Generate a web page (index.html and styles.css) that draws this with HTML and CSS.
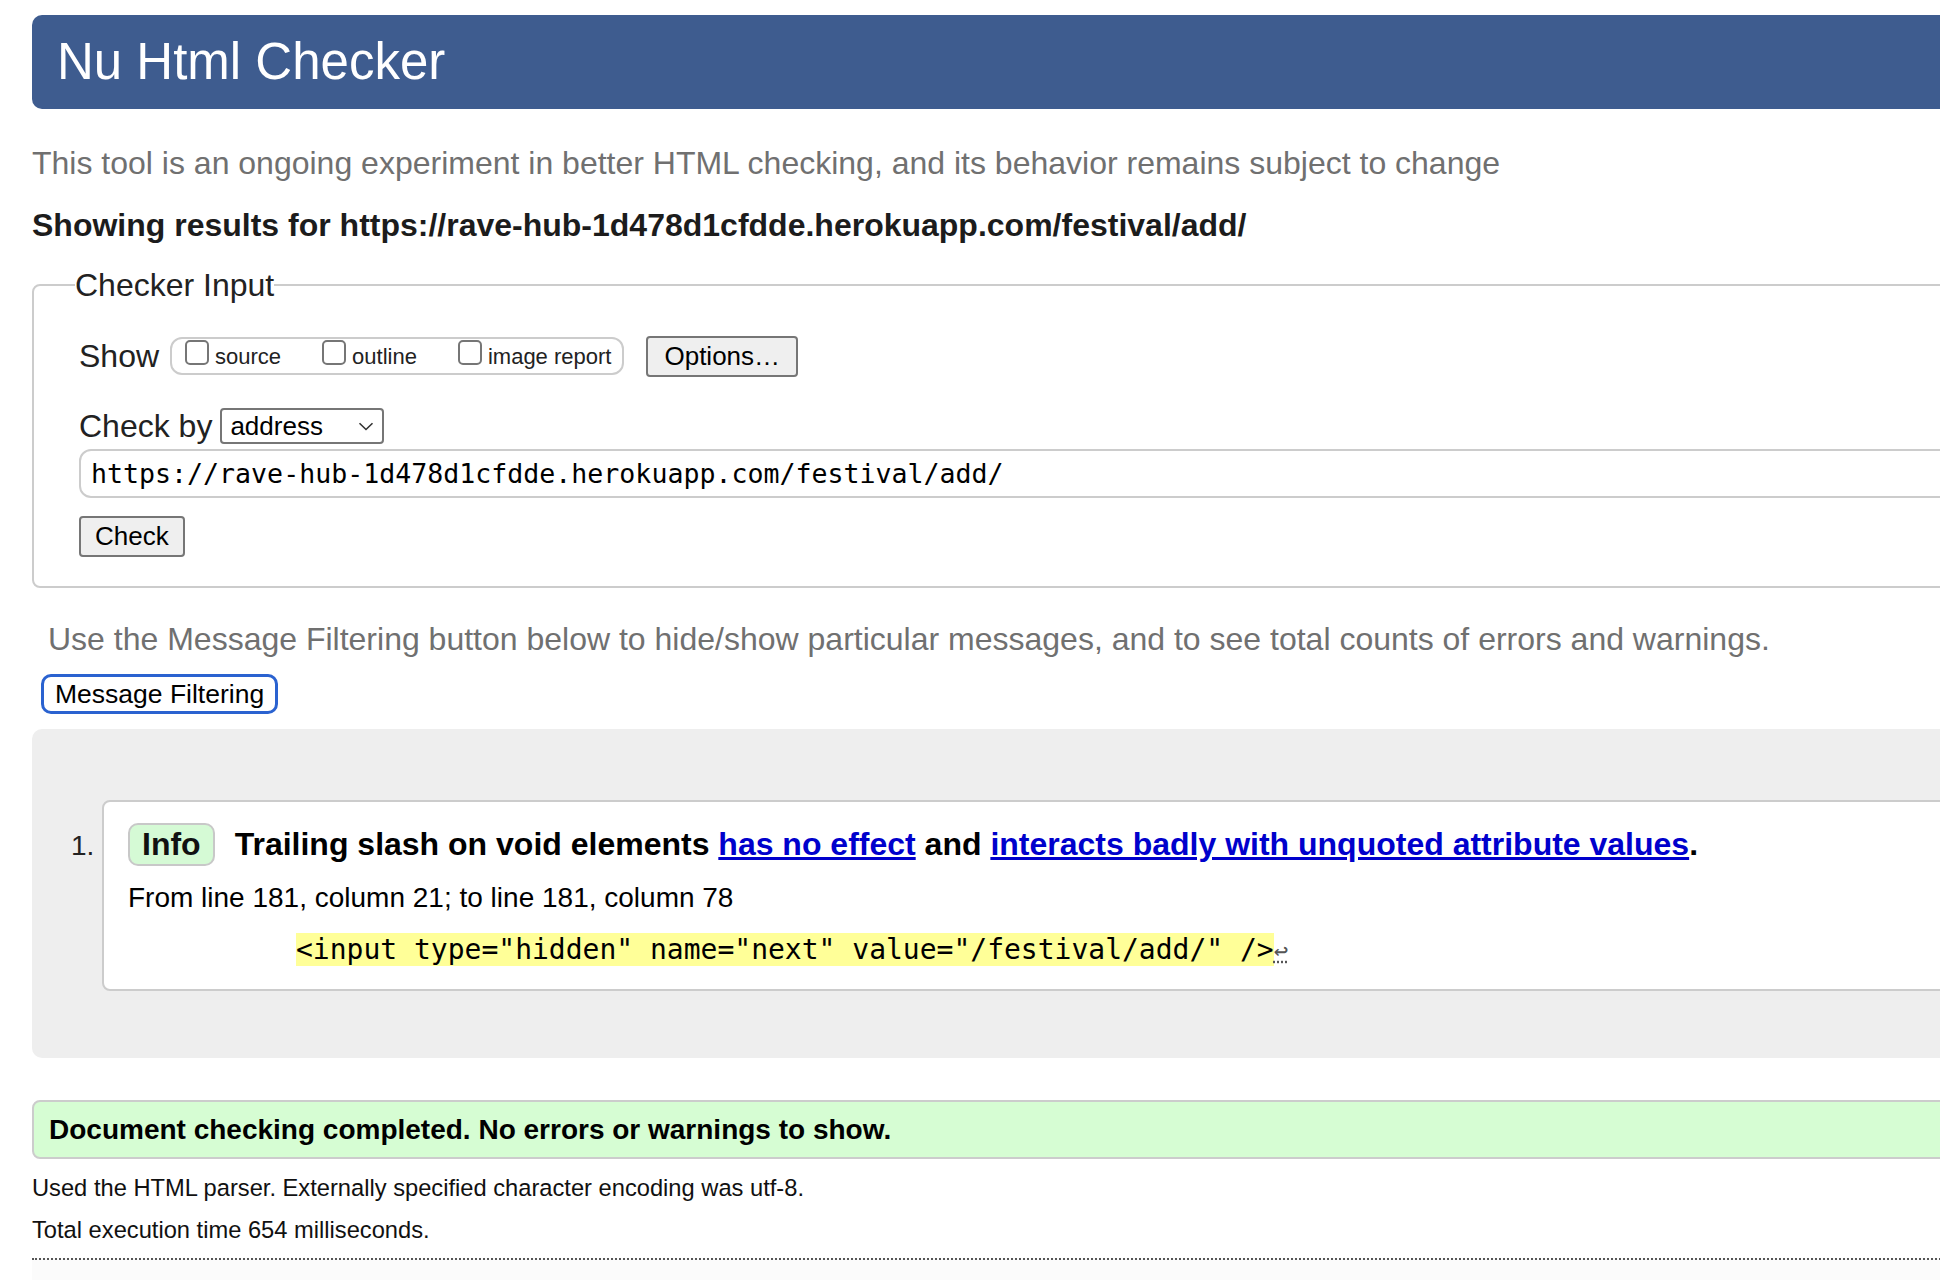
FILE: index.html
```html
<!DOCTYPE html>
<html lang="en">
<head>
<meta charset="utf-8">
<title>Nu Html Checker</title>
<link rel="stylesheet" href="styles.css">
</head>
<body>
<div class="page">
  <h1 class="masthead">Nu Html Checker</h1>
  <p class="intro">This tool is an ongoing experiment in better HTML checking, and its behavior remains subject to change</p>
  <p class="showing">Showing results for https://rave-hub-1d478d1cfdde.herokuapp.com/festival/add/</p>

  <fieldset class="checker">
    <legend class="checker-legend">Checker Input</legend>
    <div class="row show-row">
      <span class="row-label">Show</span>
      <div class="pill">
        <label class="opt"><span class="cb"></span><span class="opt-text">source</span></label>
        <label class="opt"><span class="cb"></span><span class="opt-text">outline</span></label>
        <label class="opt"><span class="cb"></span><span class="opt-text">image report</span></label>
      </div>
      <button class="btn btn-options" type="button">Options…</button>
    </div>
    <div class="row by-row">
      <span class="row-label">Check by</span>
      <div class="select"><span>address</span>
        <svg class="chev" width="16" height="9" viewBox="0 0 16 9"><path d="M1.5 1.2 8 7.5l6.5-6.3" fill="none" stroke="#333" stroke-width="1.6"/></svg>
      </div>
    </div>
    <div class="url">https://rave-hub-1d478d1cfdde.herokuapp.com/festival/add/</div>
    <button class="btn btn-check" type="button">Check</button>
  </fieldset>

  <p class="filter-note">Use the Message Filtering button below to hide/show particular messages, and to see total counts of errors and warnings.</p>
  <button class="filter-btn" type="button">Message Filtering</button>

  <div class="results">
    <div class="msg-row">
      <span class="msg-num">1.</span>
      <div class="card">
        <div class="msg-title">
          <span class="badge">Info</span>
          <span class="msg-text">Trailing slash on void elements <a href="#">has no effect</a> and <a href="#">interacts badly with unquoted attribute values</a>.</span>
        </div>
        <p class="loc">From line 181, column 21; to line 181, column 78</p>
        <p class="extract"><code><mark class="hl">&lt;input type="hidden" name="next" value="/festival/add/" /&gt;</mark><span class="lf">↩</span></code></p>
      </div>
    </div>
  </div>

  <p class="success">Document checking completed. No errors or warnings to show.</p>
  <p class="details first">Used the HTML parser. Externally specified character encoding was utf-8.</p>
  <p class="details">Total execution time 654 milliseconds.</p>
  <div class="footer"></div>
</div>
</body>
</html>
```
FILE: styles.css
```css
html, body {
  margin: 0;
  padding: 0;
  overflow: hidden;
  background: #fff;
}
body {
  font-family: "Liberation Sans", Arial, sans-serif;
  color: #222;
}
.page {
  width: 2100px;
  padding: 15px 0 0 32px;
}
.masthead {
  margin: 0;
  height: 94px;
  line-height: 94px;
  background: #3e5c8f;
  color: #fff;
  font-size: 51px;
  font-weight: 400;
  padding-left: 25px;
  border-radius: 10px;
}
.intro {
  margin: 34px 0 0;
  font-size: 32px;
  line-height: 40px;
  color: #707070;
}
.showing {
  margin: 22px 0 0;
  font-size: 32px;
  line-height: 40px;
  font-weight: bold;
  color: #1c1c1c;
}
.checker {
  margin: 20px 0 0;
  padding: 30px 0 29px 45px;
  border: 2px solid #ccc;
  border-radius: 8px;
  min-width: 0;
}
.checker-legend {
  padding: 0;
  margin-left: -4px;
  font-size: 32px;
  line-height: 40px;
  color: #222;
}
.row {
  display: flex;
  align-items: center;
}
.row-label {
  font-size: 32px;
  line-height: 40px;
  color: #222;
}
.show-row {
  height: 42px;
}
.pill {
  display: flex;
  align-items: flex-start;
  box-sizing: border-box;
  height: 38px;
  margin-left: 11px;
  padding: 0 11px 0 13px;
  border: 2px solid #ccc;
  border-radius: 12px;
  gap: 41px;
}
.opt {
  display: flex;
  align-items: flex-start;
  gap: 6px;
}
.cb {
  box-sizing: border-box;
  width: 24px;
  height: 25px;
  margin-top: 1px;
  border: 2px solid #767676;
  border-radius: 5px;
  background: #fff;
}
.opt-text {
  font-size: 22px;
  line-height: 36px;
  color: #222;
}
.btn {
  box-sizing: border-box;
  height: 41px;
  padding: 0 14px;
  font-family: "Liberation Sans", Arial, sans-serif;
  font-size: 26px;
  color: #000;
  background: #efefef;
  border: 2px solid #767676;
  border-radius: 4px;
}
.btn-options {
  margin-left: 22px;
  padding: 0 16px;
}
.by-row {
  margin-top: 29px;
  height: 40px;
}
.select {
  box-sizing: border-box;
  width: 164px;
  height: 36px;
  margin-left: 8px;
  padding: 0 8px 0 8px;
  display: flex;
  align-items: center;
  justify-content: space-between;
  font-size: 26px;
  color: #000;
  border: 2px solid #767676;
  border-radius: 4px;
  background: #fff;
}
.url {
  box-sizing: border-box;
  margin-top: 3px;
  height: 49px;
  line-height: 45px;
  padding-left: 10px;
  border: 2px solid #ccc;
  border-radius: 12px;
  font-family: "DejaVu Sans Mono", monospace;
  font-size: 26.6px;
  color: #000;
}
.btn-check {
  display: block;
  margin-top: 18px;
}
.filter-note {
  margin: 31px 0 0;
  padding-left: 16px;
  font-size: 32px;
  line-height: 40px;
  color: #707070;
}
.filter-btn {
  display: block;
  box-sizing: border-box;
  margin: 15px 0 0 9px;
  height: 40px;
  padding: 0 11px;
  font-family: "Liberation Sans", Arial, sans-serif;
  font-size: 26.5px;
  color: #000;
  background: #fff;
  border: 3px solid #2a62d0;
  border-radius: 10px;
}
.results {
  margin-top: 15px;
  padding: 71px 0 67px 0;
  background: #eee;
  border-radius: 10px;
}
.msg-row {
  display: flex;
  align-items: flex-start;
}
.msg-num {
  width: 70px;
  box-sizing: border-box;
  padding-left: 39px;
  margin-top: 24px;
  font-size: 28px;
  line-height: 44px;
  color: #222;
}
.card {
  flex: 1;
  padding: 20px 0 17px 24px;
  background: #fff;
  border: 2px solid #ccc;
  border-radius: 8px;
}
.msg-title {
  display: flex;
  align-items: center;
  height: 44px;
}
.badge {
  box-sizing: border-box;
  height: 43px;
  line-height: 39px;
  padding: 0 12px;
  font-size: 32px;
  font-weight: bold;
  color: #111;
  background: #d5fad5;
  border: 2px solid #c8c8c8;
  border-radius: 10px;
}
.msg-text {
  margin-left: 20px;
  font-size: 32px;
  font-weight: bold;
  color: #000;
  white-space: nowrap;
}
.msg-text a {
  color: #0000cc;
  text-decoration: underline;
}
.loc {
  margin: 14px 0 0;
  font-size: 28px;
  line-height: 36px;
  color: #000;
}
.extract {
  margin: 16px 0 0;
  padding-left: 168px;
  line-height: 36px;
}
.extract code {
  font-family: "DejaVu Sans Mono", monospace;
  font-size: 28px;
  color: #000;
}
.hl {
  background: #ffff98;
  color: #000;
}
.lf {
  font-size: 24px;
  color: #555;
  text-decoration: underline dotted #555;
}
.success {
  box-sizing: border-box;
  margin: 42px 0 0;
  height: 59px;
  line-height: 55px;
  padding-left: 15px;
  font-size: 28px;
  font-weight: bold;
  color: #000;
  background: #d6fdd3;
  border: 2px solid #ccc;
  border-radius: 8px;
}
.details {
  margin: 10px 0 0;
  font-size: 23.7px;
  line-height: 32px;
  color: #111;
}
.details.first {
  margin-top: 13px;
}
.footer {
  margin-top: 12px;
  height: 100px;
  border-top: 2px dotted #555;
  background: #fbfbfb;
}
```
